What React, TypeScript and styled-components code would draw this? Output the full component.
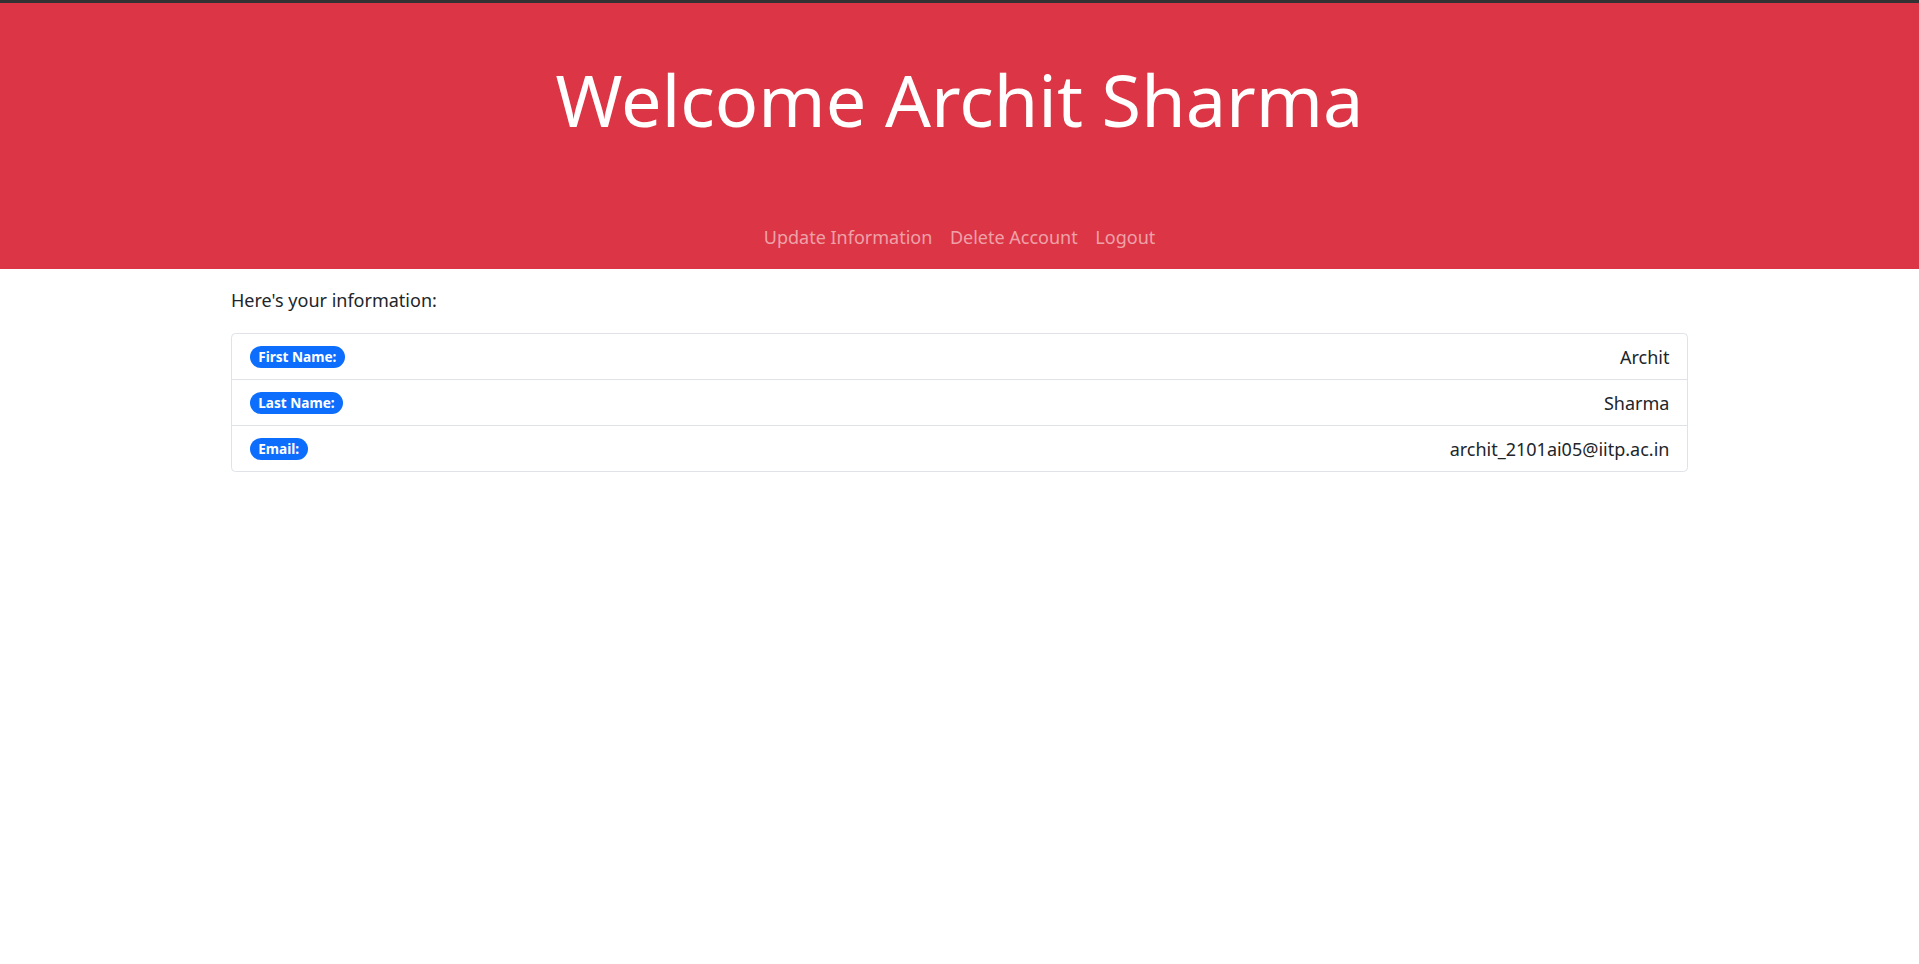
import React from "react";
import styled, { createGlobalStyle } from "styled-components";

const GlobalStyle = createGlobalStyle`
  html, body {
    margin: 0;
    padding: 0;
    background: #ffffff;
  }
  body {
    font-family: "Noto Sans", "Open Sans", sans-serif;
    font-size: 18px;
    line-height: 1.5;
    color: #212529;
  }
  * { box-sizing: border-box; }
`;

const TopStrip = styled.div`
  height: 3px;
  background: #323232;
`;

const Header = styled.header`
  background: #dc3545;
  padding: 53px 0 10px;
  display: flex;
  flex-direction: column;
  align-items: center;
`;

const Title = styled.h1`
  margin: 0 0 73px;
  font-size: 72px;
  font-weight: 400;
  line-height: 1.2;
  color: #ffffff;
  text-align: center;
`;

const Nav = styled.nav`
  display: flex;
  justify-content: center;
`;

const NavLink = styled.a`
  padding: 8.8px;
  font-size: 18px;
  line-height: 26.4px;
  color: rgba(255, 255, 255, 0.55);
  text-decoration: none;
  cursor: pointer;
`;

const Main = styled.main`
  max-width: 1457px;
  margin: 0 auto;
  padding-top: 18px;
`;

const Intro = styled.p`
  margin: 0 0 19.5px;
  line-height: 26.4px;
`;

const List = styled.ul`
  list-style: none;
  margin: 0;
  padding: 0;
  border: 1px solid #dfe2e6;
  border-radius: 4.4px;
`;

const Row = styled.li<{ $last?: boolean }>`
  display: flex;
  justify-content: space-between;
  align-items: center;
  padding: 9.3px 17.6px;
  line-height: 26.4px;
  border-bottom: ${(p) => (p.$last ? "none" : "1px solid #dfe2e6")};
`;

const Badge = styled.span`
  display: inline-block;
  background: #0d6efd;
  color: #ffffff;
  font-size: 13.6px;
  font-weight: 700;
  line-height: 1;
  padding: 4.5px 8.6px;
  border-radius: 50rem;
`;

const Value = styled.span`
  color: #212529;
`;

const rows = [
  { label: "First Name:", value: "Archit" },
  { label: "Last Name:", value: "Sharma" },
  { label: "Email:", value: "archit_2101ai05@iitp.ac.in" },
];

export default function App() {
  return (
    <>
      <GlobalStyle />
      <TopStrip />
      <Header>
        <Title>Welcome Archit Sharma</Title>
        <Nav>
          <NavLink>Update Information</NavLink>
          <NavLink>Delete Account</NavLink>
          <NavLink>Logout</NavLink>
        </Nav>
      </Header>
      <Main>
        <Intro>Here's your information:</Intro>
        <List>
          {rows.map((r, i) => (
            <Row key={r.label} $last={i === rows.length - 1}>
              <Badge>{r.label}</Badge>
              <Value>{r.value}</Value>
            </Row>
          ))}
        </List>
      </Main>
    </>
  );
}
